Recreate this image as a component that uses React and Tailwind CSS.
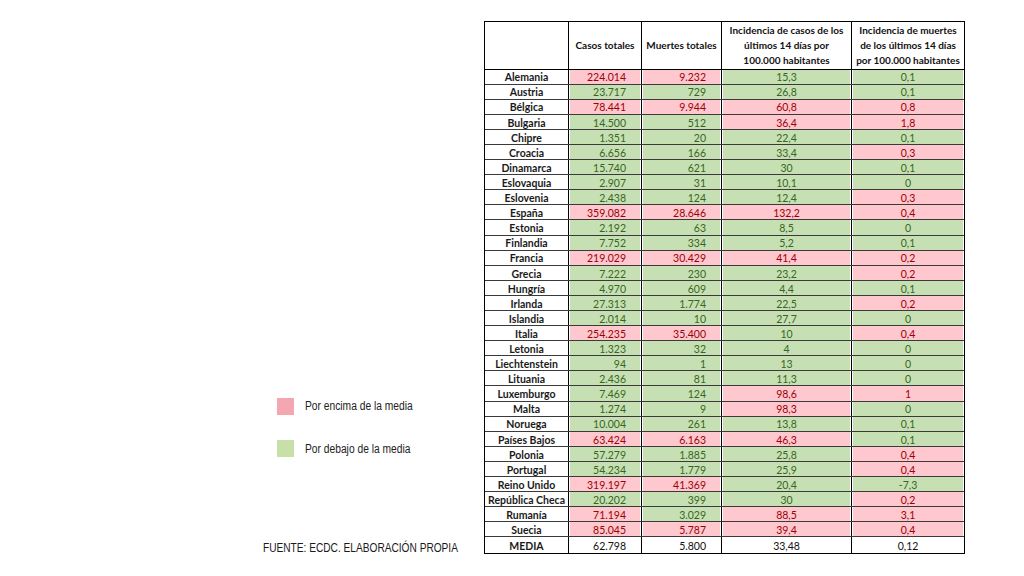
import React from "react";

const rows = [
  ["Alemania", "224.014", "R", "9.232", "R", "15,3", "G", "0,1", "G"],
  ["Austria", "23.717", "G", "729", "G", "26,8", "G", "0,1", "G"],
  ["Bélgica", "78.441", "R", "9.944", "R", "60,8", "R", "0,8", "R"],
  ["Bulgaria", "14.500", "G", "512", "G", "36,4", "R", "1,8", "R"],
  ["Chipre", "1.351", "G", "20", "G", "22,4", "G", "0,1", "G"],
  ["Croacia", "6.656", "G", "166", "G", "33,4", "G", "0,3", "R"],
  ["Dinamarca", "15.740", "G", "621", "G", "30", "G", "0,1", "G"],
  ["Eslovaquia", "2.907", "G", "31", "G", "10,1", "G", "0", "G"],
  ["Eslovenia", "2.438", "G", "124", "G", "12,4", "G", "0,3", "R"],
  ["España", "359.082", "R", "28.646", "R", "132,2", "R", "0,4", "R"],
  ["Estonia", "2.192", "G", "63", "G", "8,5", "G", "0", "G"],
  ["Finlandia", "7.752", "G", "334", "G", "5,2", "G", "0,1", "G"],
  ["Francia", "219.029", "R", "30.429", "R", "41,4", "R", "0,2", "R"],
  ["Grecia", "7.222", "G", "230", "G", "23,2", "G", "0,2", "R"],
  ["Hungría", "4.970", "G", "609", "G", "4,4", "G", "0,1", "G"],
  ["Irlanda", "27.313", "G", "1.774", "G", "22,5", "G", "0,2", "R"],
  ["Islandia", "2.014", "G", "10", "G", "27,7", "G", "0", "G"],
  ["Italia", "254.235", "R", "35.400", "R", "10", "G", "0,4", "R"],
  ["Letonia", "1.323", "G", "32", "G", "4", "G", "0", "G"],
  ["Liechtenstein", "94", "G", "1", "G", "13", "G", "0", "G"],
  ["Lituania", "2.436", "G", "81", "G", "11,3", "G", "0", "G"],
  ["Luxemburgo", "7.469", "G", "124", "G", "98,6", "R", "1", "R"],
  ["Malta", "1.274", "G", "9", "G", "98,3", "R", "0", "G"],
  ["Noruega", "10.004", "G", "261", "G", "13,8", "G", "0,1", "G"],
  ["Países Bajos", "63.424", "R", "6.163", "R", "46,3", "R", "0,1", "G"],
  ["Polonia", "57.279", "G", "1.885", "G", "25,8", "G", "0,4", "R"],
  ["Portugal", "54.234", "G", "1.779", "G", "25,9", "G", "0,4", "R"],
  ["Reino Unido", "319.197", "R", "41.369", "R", "20,4", "G", "-7,3", "G"],
  ["República Checa", "20.202", "G", "399", "G", "30", "G", "0,2", "R"],
  ["Rumanía", "71.194", "R", "3.029", "G", "88,5", "R", "3,1", "R"],
  ["Suecia", "85.045", "R", "5.787", "R", "39,4", "R", "0,4", "R"],
];

function Cell({ v, c, align, last }) {
  const fill =
    c === "R"
      ? "bg-[#ffc7ce] text-[#9c0006]"
      : c === "G"
      ? "bg-[#c6e0b4] text-[#36661f]"
      : "bg-white text-[#111]";
  const al =
    align === "right" ? "justify-end pr-[14px]" : "justify-center";
  return (
    <div
      className={
        "h-full px-[1px] " + (last ? "" : "border-r-[1.5px] border-black")
      }
    >
      <div className={"h-full flex items-center pt-[2px] " + al + " " + fill}>
        <span className="leading-none">{v}</span>
      </div>
    </div>
  );
}

function Row({ r, media, isLast }) {
  return (
    <div
      className={
        "grid grid-cols-[84px_73px_80px_130px_112px] h-[15.1px] " +
        (isLast ? "" : "border-b border-[#3a3a3a]")
      }
    >
      <div className="h-full border-r-[1.5px] border-black flex items-center justify-center pt-[2px] font-bold text-[#1a1a1a] whitespace-nowrap">
        <span className="leading-none">{r[0]}</span>
      </div>
      <Cell v={r[1]} c={media ? "W" : r[2]} align="right" />
      <Cell v={r[3]} c={media ? "W" : r[4]} align="right" />
      <Cell v={r[5]} c={media ? "W" : r[6]} align="center" />
      <Cell v={r[7]} c={media ? "W" : r[8]} align="center" last />
    </div>
  );
}

export default function App() {
  return (
    <div className="w-[1024px] h-[576px] bg-white flex overflow-hidden">
      <div className="w-[484px] shrink-0 flex flex-col pt-[398px]">
        <div className="ml-[277px] flex items-center h-[17px]">
          <div className="w-[17px] h-[17px] bg-[#f4a7b0]" />
          <span className="ml-[11px] inline-block origin-left scale-x-[0.82] whitespace-nowrap text-[12.5px] text-[#222] font-['Liberation_Sans',Arial,sans-serif]">
            Por encima de la media
          </span>
        </div>
        <div className="ml-[277px] mt-[25px] flex items-center h-[17px]">
          <div className="w-[17px] h-[17px] bg-[#c6e0a8]" />
          <span className="ml-[11px] pt-[2px] inline-block origin-left scale-x-[0.82] whitespace-nowrap text-[12.5px] text-[#222] font-['Liberation_Sans',Arial,sans-serif]">
            Por debajo de la media
          </span>
        </div>
        <div className="ml-[263px] mt-[77px] whitespace-nowrap">
          <span className="inline-block origin-left scale-x-[0.78] text-[13px] leading-[16px] text-[#1a1a1a] font-['Liberation_Sans',Arial,sans-serif]">
            FUENTE: ECDC. ELABORACIÓN PROPIA
          </span>
        </div>
      </div>
      <div className="mt-[21px] self-start border-[1.5px] border-black font-['Lato',sans-serif] text-[10.5px]">
        <div className="grid grid-cols-[84px_73px_80px_130px_112px] h-[47.5px] border-b-[1.5px] border-black font-bold text-[#111] text-[10px] leading-[15px]">
          <div className="border-r-[1.5px] border-black" />
          <div className="border-r-[1.5px] border-black flex items-center justify-center pt-[1px] whitespace-nowrap">
            Casos totales
          </div>
          <div className="border-r-[1.5px] border-black flex items-center justify-center pt-[1px] whitespace-nowrap">
            Muertes totales
          </div>
          <div className="border-r-[1.5px] border-black flex flex-col items-center justify-center pt-[1px] text-center whitespace-nowrap">
            <span>Incidencia de casos de los</span>
            <span>últimos 14 días por</span>
            <span>100.000 habitantes</span>
          </div>
          <div className="flex flex-col items-center justify-center pt-[1px] text-center whitespace-nowrap">
            <span>Incidencia de muertes</span>
            <span>de los últimos 14 días</span>
            <span>por 100.000 habitantes</span>
          </div>
        </div>
        {rows.map((r) => (
          <Row key={r[0]} r={r} />
        ))}
        <Row
          r={["MEDIA", "62.798", "", "5.800", "", "33,48", "", "0,12", ""]}
          media
          isLast
        />
      </div>
    </div>
  );
}
